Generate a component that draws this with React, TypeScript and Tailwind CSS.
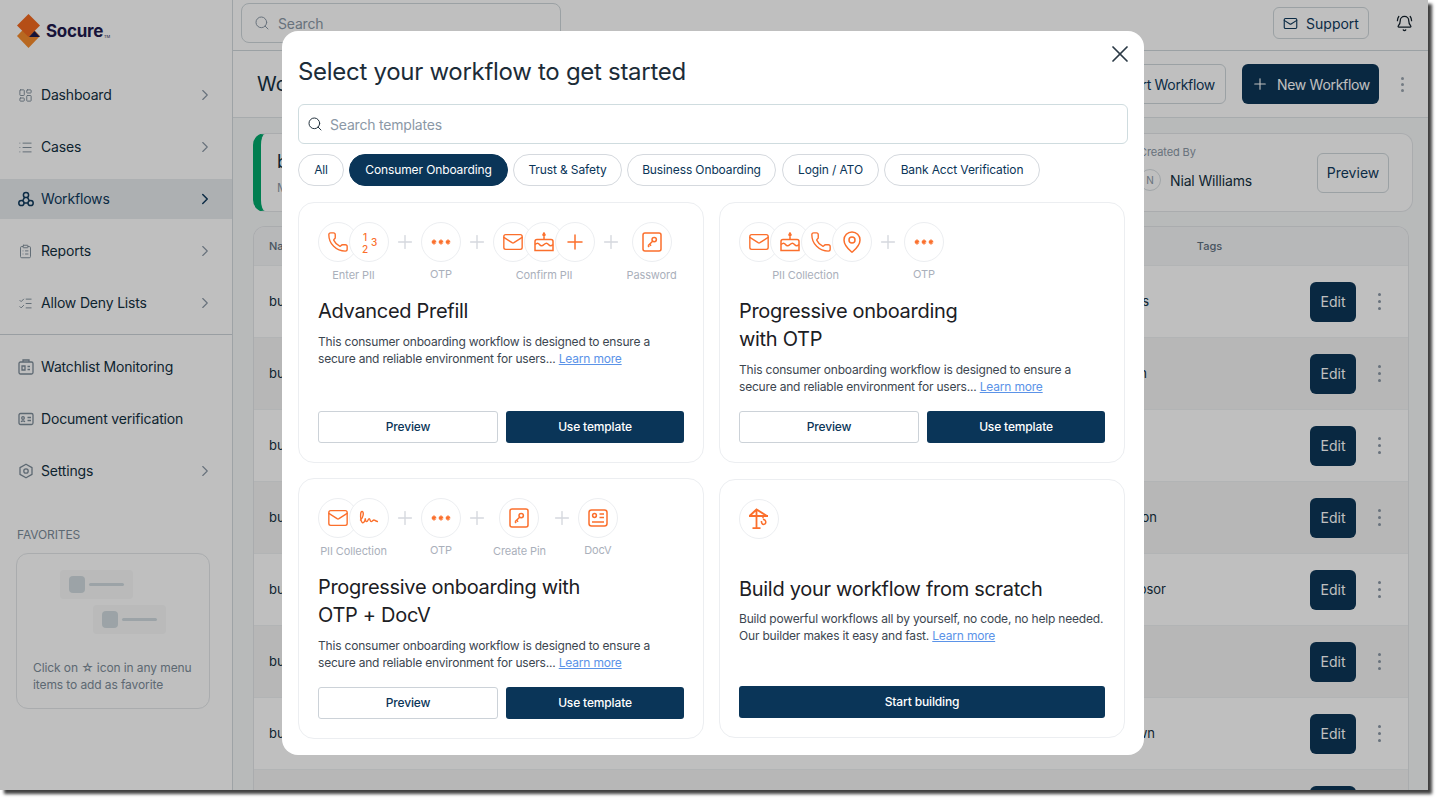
import { BellRing, ChevronRight, ClipboardList, FileText, LayoutDashboard, List, ListChecks, Mail, MapPin, Phone, Plus, Search, X } from "lucide-react";
import type { ReactNode } from "react";

const ORANGE = "text-[#fb6f2c]";

function OtpIcon() {
  const star = "M0-2.4V2.4M-2.1-1.2 2.1 1.2M-2.1 1.2 2.1-1.2";
  return (
    <svg width="20" height="6" viewBox="0 0 20 6" className={ORANGE} fill="none" stroke="currentColor" strokeWidth="1.5">
      <path d={star} transform="translate(3 3)" />
      <path d={star} transform="translate(10 3)" />
      <path d={star} transform="translate(17 3)" />
    </svg>
  );
}

function KeyIcon() {
  return (
    <svg width="20" height="20" viewBox="0 0 20 20" fill="none" stroke="currentColor" strokeWidth="1.5" className={ORANGE}>
      <rect x="1" y="1" width="18" height="18" rx="2" />
      <circle cx="12.2" cy="7.6" r="2.2" />
      <path d="M10.6 9.2 6 13.8M7.6 12.2l1.5 1.5M6 13.8l1.2 1.2" />
    </svg>
  );
}

function CakeIcon() {
  return (
    <svg width="20" height="20" viewBox="0 0 20 20" fill="none" stroke="currentColor" strokeWidth="1.5" className={ORANGE}>
      <path d="M1 18.5h18V9.5a2 2 0 0 0-2-2H3a2 2 0 0 0-2 2z" />
      <path d="M1 12.5c2-1.8 3.2-1.8 4.5 0s2.6 1.8 4.5 0 3-1.8 4.5 0 2.8 1.8 4.5 0" />
      <path d="M10 7.5V4.6M10 1l1 1.8a1 1 0 1 1-2 0z" />
    </svg>
  );
}

function SignIcon() {
  return (
    <svg width="20" height="20" viewBox="0 0 20 20" fill="none" stroke="currentColor" strokeWidth="1.4" strokeLinecap="round" className={ORANGE}>
      <path d="M1.5 12c3-2.5 3.6-8 1.6-8.6C1.4 3.2 1.3 8 2 12c.5 2.6 2 3.6 3.4 1.6.7-1 .9-3.3.9-3.3s.1 3.3 1.4 3.3c1.2 0 1.5-3 2.5-3 .9 0 .8 3 2 3 1.2 0 1.6-1.6 2.8-1.6.9 0 1 1 3.4 1.5" />
    </svg>
  );
}

function DocIcon() {
  return (
    <svg width="20" height="18" viewBox="0 0 20 18" fill="none" stroke="currentColor" strokeWidth="1.5" className={ORANGE}>
      <rect x="1" y="1" width="18" height="16" rx="2.5" />
      <circle cx="6.5" cy="6.5" r="1.9" />
      <path d="M11.5 5h4.5M11.5 8.5h4.5M4 13h12" />
    </svg>
  );
}

function CraneIcon() {
  return (
    <svg width="22" height="22" viewBox="0 0 22 22" fill="none" stroke="currentColor" strokeWidth="1.8" className={ORANGE}>
      <path d="M1 8h19M1.5 8 8.5 1.5 19 8M8.5 1.5V20M4.5 20.2h8" />
      <path d="M15 8v2.2M13.4 13c0 2.2 1 3.4 2.2 3.4s2.2-1 2.2-2.3c0-1.4-1-2.4-2.8-2.9" strokeWidth="1.5" />
    </svg>
  );
}

function NumbersIcon() {
  return (
    <span className={`relative block h-[24px] w-[22px] text-[10px] font-medium leading-none ${ORANGE}`}>
      <span className="absolute left-[5px] top-[2px]">1</span>
      <span className="absolute left-[4px] top-[14px]">2</span>
      <span className="absolute left-[13px] top-[7px]">3</span>
    </span>
  );
}

function Bubble({ children, overlap }: { children: ReactNode; overlap?: boolean }) {
  return (
    <div
      className={`flex h-10 w-10 shrink-0 items-center justify-center rounded-full border border-[#eceef1] bg-white ${
        overlap ? "-ml-[9px]" : ""
      }`}
    >
      {children}
    </div>
  );
}

type Step = { label: string; up?: boolean; narrow?: boolean; icons: ReactNode[] };

const phone = <Phone size={22} strokeWidth={1.5} className={ORANGE} />;
const mail = <Mail size={22} strokeWidth={1.5} className={ORANGE} />;
const cake = <CakeIcon />;
const plus = <Plus size={24} strokeWidth={1.5} className={ORANGE} />;
const pin = <MapPin size={24} strokeWidth={1.5} className={ORANGE} />;
const sign = <SignIcon />;
const idcard = <DocIcon />;
const otp = <OtpIcon />;
const key = <KeyIcon />;

function Steps({ steps }: { steps: Step[] }) {
  return (
    <div className="flex items-start gap-2">
      {steps.map((s, i) => (
        <div key={s.label} className="flex items-start gap-2">
          {i > 0 && <Plus size={22} strokeWidth={1.5} className="-mx-[3px] mt-[9px] text-[#d5d8de]" />}
          <div className={`flex flex-col items-center ${s.narrow ? "w-[49px]" : ""}`}>
            <div className="flex">
              {s.icons.map((icon, j) => (
                <Bubble key={j} overlap={j > 0}>
                  {icon}
                </Bubble>
              ))}
            </div>
            <span className={`whitespace-nowrap text-[11px] leading-[14px] tracking-[-0.1px] text-[#aab0bb] ${s.up ? "mt-[5px]" : "mt-[6px]"}`}>
              {s.label}
            </span>
          </div>
        </div>
      ))}
    </div>
  );
}

function TemplateCard({ steps, title, footerTop }: { steps: Step[]; title: ReactNode; footerTop: string }) {
  return (
    <div className="flex h-[261px] flex-col rounded-2xl border border-[#eceef1] bg-white px-[19px] pt-[19px]">
      <Steps steps={steps} />
      <h3 className="mt-[15px] text-[20px] leading-[28px] tracking-[-0.3px] text-[#1c2024]">{title}</h3>
      <p className="mt-2 text-[12px] leading-[17px] tracking-[-0.19px] text-[#3c4650]">
        This consumer onboarding workflow is designed to ensure a
        <br />
        secure and reliable environment for users...{" "}
        <span className="text-[#5b93e8] underline">Learn more</span>
      </p>
      <div className={`flex gap-2 ${footerTop}`}>
        <button className="h-8 flex-1 rounded-[3px] border border-[#ccd2d8] bg-white text-[12px] font-medium tracking-[-0.15px] text-[#0a3558]">
          Preview
        </button>
        <button className="h-8 flex-1 rounded-[3px] bg-[#0a3558] text-[12px] font-medium tracking-[-0.15px] text-white">Use template</button>
      </div>
    </div>
  );
}

function WorkflowsIcon() {
  return (
    <svg width="16" height="16" viewBox="0 0 16 16" fill="none" stroke="currentColor" strokeWidth="1.5">
      <circle cx="8" cy="4" r="2.6" />
      <circle cx="3.4" cy="12" r="2.6" />
      <circle cx="12.6" cy="12" r="2.6" />
      <path d="M6.6 6.2 4.8 9.6M9.4 6.2l1.8 3.4M6 12h4" />
    </svg>
  );
}

function WatchIcon() {
  return (
    <svg width="16" height="16" viewBox="0 0 16 16" fill="none" stroke="currentColor" strokeWidth="1.3">
      <rect x="1" y="3" width="14" height="12" rx="1.5" />
      <path d="M5 3V1h6v2M4 7h3v4H4zM9.5 7.5H12M9.5 10.5H12" />
    </svg>
  );
}

function DocNavIcon() {
  return (
    <svg width="16" height="16" viewBox="0 0 16 16" fill="none" stroke="currentColor" strokeWidth="1.3">
      <rect x="1" y="2.5" width="14" height="11" rx="1.5" />
      <circle cx="5" cy="7" r="1.3" />
      <path d="M3.2 11c.6-1.4 3-1.4 3.6 0M9.5 6.5H13M9.5 9.5H13" />
    </svg>
  );
}

function SettingsIcon() {
  return (
    <svg width="16" height="16" viewBox="0 0 16 16" fill="none" stroke="currentColor" strokeWidth="1.3">
      <path d="M8 1.2 14 4.6v6.8L8 14.8l-6-3.4V4.6z" strokeLinejoin="round" />
      <circle cx="8" cy="8" r="2.2" />
    </svg>
  );
}

const NAV_TOP = [
  { label: "Dashboard", icon: LayoutDashboard },
  { label: "Cases", icon: List },
  { label: "Workflows", icon: WorkflowsIcon, active: true },
  { label: "Reports", icon: ClipboardList },
  { label: "Allow Deny Lists", icon: ListChecks },
];

const NAV_BOTTOM = [
  { label: "Watchlist Monitoring", icon: WatchIcon, noArrow: true },
  { label: "Document verification", icon: DocNavIcon, noArrow: true },
  { label: "Settings", icon: SettingsIcon },
];

function NavRow({ label, Icon, active, noArrow }: { label: string; Icon: any; active?: boolean; noArrow?: boolean }) {
  return (
    <div className={`flex h-10 items-center pl-[18px] pr-[18px] ${active ? "bg-[#e7ebee] text-[#0f3a5c]" : "text-[#13303f]"}`}>
      <span className={`flex w-[23px] ${active ? "text-[#0f3a5c]" : "text-[#7d8c99]"}`}>
        <Icon size={15} strokeWidth={1.5} />
      </span>
      <span className="flex-1 pb-[2px] text-[14px] tracking-[-0.18px]">{label}</span>
      {!noArrow && <ChevronRight size={18} strokeWidth={active ? 2 : 1.5} className={active ? "text-[#0f3a5c]" : "text-[#8b98a6]"} />}
    </div>
  );
}

function FavoriteChip({ offset }: { offset: string }) {
  return (
    <div className={`flex h-[29px] w-[73px] items-center gap-1 self-start rounded bg-[#f8f9f9] px-[9px] ${offset}`}>
      <span className="h-[17px] w-[17px] rounded bg-[#d0dadf]" />
      <span className="h-[3px] w-9 rounded bg-[#d0dadf]" />
    </div>
  );
}

function Sidebar() {
  return (
    <aside className="flex h-full w-[233px] shrink-0 flex-col border-r border-[#d3dade] bg-white">
      <div className="flex h-[75px] items-start pl-[17px] pt-[14px]">
        <svg width="24" height="34" viewBox="0 0 24 34">
          <path d="M0 22 11.5 10 23 22 11.5 34z" fill="#f68b2c" />
          <path d="M11.5 0 23 11.5 11.5 23 0 11.5z" fill="#f2681f" />
          <path d="M12 23 17.5 17 23 23z" fill="#1f1a4d" />
        </svg>
        <span className="ml-[5px] mt-[5px] text-[17px] font-bold tracking-[-0.3px] text-[#1f1a4d]">Socure</span>
        <span className="ml-px mt-[20px] text-[4px] text-[#1f1a4d]">TM</span>
      </div>
      <nav className="flex flex-col gap-3">
        {NAV_TOP.map((n) => (
          <NavRow key={n.label} label={n.label} Icon={n.icon} active={n.active} />
        ))}
      </nav>
      <div className="mt-[11px] border-t border-[#ccd3d8]" />
      <nav className="mt-3 flex flex-col gap-3">
        {NAV_BOTTOM.map((n) => (
          <NavRow key={n.label} label={n.label} Icon={n.icon} noArrow={n.noArrow} />
        ))}
      </nav>
      <div className="mt-9 pl-[17px] text-[12px] leading-4 tracking-[-0.1px] text-[#7d8c99]">FAVORITES</div>
      <div className="ml-4 mt-[10px] flex h-[156px] w-[194px] flex-col rounded-xl border border-[#e3e6e9] px-4 pt-4">
        <FavoriteChip offset="ml-[27px]" />
        <FavoriteChip offset="ml-[60px] mt-[6px]" />
        <p className="mt-[25px] text-[12px] leading-[17px] tracking-[-0.1px] text-[#7d8c99]">
          Click on ☆ icon in any menu
          <br />
          items to add as favorite
        </p>
      </div>
    </aside>
  );
}

const ROWS = [
  { owner: "Williams", w: "w-[59px]" },
  { owner: "Nolan", w: "w-[57px]" },
  { owner: "", w: "w-[59px]" },
  { owner: "Jason", w: "w-[67px]" },
  { owner: "Ambrosor", w: "w-[76px]" },
  { owner: "", w: "w-[59px]" },
  { owner: "Brown", w: "w-[65px]" },
  { owner: "", w: "w-[59px]" },
];

function Page() {
  return (
    <div className="flex h-full">
      <Sidebar />
      <main className="flex min-w-0 flex-1 flex-col bg-[#f6f8f9]">
        <header className="flex h-[51px] shrink-0 items-start border-b border-[#cfd7db] bg-white pl-2 pr-[15px]">
          <div className="mt-[3px] flex h-10 w-[320px] items-center gap-2 rounded-lg border border-[#cfd7db] px-3 text-[14px] tracking-[-0.2px] text-[#8b98a6]">
            <Search size={16} strokeWidth={1.5} />
            Search
          </div>
          <div className="ml-auto mt-[7px] flex h-8 w-24 items-center justify-center gap-2 rounded-md border border-[#cfd7db] text-[14px] text-[#0f3a5c]">
            <Mail size={15} strokeWidth={1.8} />
            Support
          </div>
          <BellRing size={17} strokeWidth={1.8} className="ml-[27px] mt-[15px] text-[#13202b]" />
        </header>
        <div className="flex h-[67px] shrink-0 items-center border-b border-[#dfe4e7] bg-white pl-6 pr-[24px]">
          <h1 className="text-[20px] text-[#13303f]">Workflows</h1>
          <div className="ml-auto flex h-10 w-[150px] items-center justify-end rounded-md border border-[#cfd7db] pr-[10px] text-[14px] tracking-[-0.3px] text-[#0f3a5c]">
            Import Workflow
          </div>
          <div className="ml-4 flex h-10 w-[137px] items-center justify-center gap-2 rounded-md bg-[#0c3657] text-[14px] tracking-[-0.3px] text-white">
            <Plus size={18} strokeWidth={1.5} />
            New Workflow
          </div>
          <span className="ml-[22px] flex flex-col gap-[3px]">
            <i className="h-[3px] w-[3px] rounded-full bg-[#9aa5af]" />
            <i className="h-[3px] w-[3px] rounded-full bg-[#9aa5af]" />
            <i className="h-[3px] w-[3px] rounded-full bg-[#9aa5af]" />
          </span>
        </div>
        <div className="ml-5 mr-[15px] mt-[15px] flex h-[79px] shrink-0 items-center rounded-xl border border-[#e3e6e9] border-l-[8px] border-l-[#00a86b] bg-white pl-4 pr-[23px]">
          <div>
            <div className="text-[18px] leading-6 text-[#13303f]">business</div>
            <div className="mt-[6px] text-[12px] leading-4 text-[#8b98a6]">Modified</div>
          </div>
          <div className="ml-auto w-[178px] self-start pt-[11px]">
            <div className="text-[11px] leading-[14px] tracking-[-0.1px] text-[#8b98a6]">Created By</div>
            <div className="mt-[10px] flex h-[22px] items-center gap-[9px] text-[14px] tracking-[-0.15px] text-[#13303f]">
              <span className="flex h-[22px] w-[22px] items-center justify-center rounded-full border border-[#d7dde1] text-[10px] text-[#8b98a6]">N</span>
              Nial Williams
            </div>
          </div>
          <div className="flex h-10 w-[72px] items-center justify-center rounded-md border border-[#cfd7db] text-[14px] text-[#0f3a5c]">Preview</div>
        </div>
        <div className="ml-5 mr-[19px] mt-[14px] flex-1 overflow-hidden rounded-t-xl border-x border-t border-[#e3e6e9]">
          <div className="flex h-[38px] items-center bg-[#f5f6f7] pl-[15px] text-[11px] font-medium text-[#5f7080]">
            Name
            <span className="ml-[897px]">Tags</span>
          </div>
          {ROWS.map((r, i) => (
            <div key={i} className={`flex h-[72px] items-center border-t border-[#eef0f2] pl-[15px] pr-[27px] ${i % 2 ? "bg-[#f4f5f5]" : "bg-white"}`}>
              <span className="w-[821px] text-[13px] text-[#13303f]">business</span>
              <span className={`${r.w} whitespace-nowrap text-right text-[13px] text-[#13303f]`}>{r.owner}</span>
              <div className="ml-auto flex h-10 w-[46px] items-center justify-center rounded-md bg-[#0c3657] text-[14px] text-white">Edit</div>
              <span className="ml-[22px] flex flex-col gap-[4px]">
                <i className="h-[3px] w-[3px] rounded-full bg-[#8b98a6]" />
                <i className="h-[3px] w-[3px] rounded-full bg-[#8b98a6]" />
                <i className="h-[3px] w-[3px] rounded-full bg-[#8b98a6]" />
              </span>
            </div>
          ))}
        </div>
      </main>
    </div>
  );
}

const CHIPS = [
  { label: "All", w: "w-[46px]", gap: "" },
  { label: "Consumer Onboarding", w: "w-[159px]", gap: "ml-[5px]" },
  { label: "Trust & Safety", w: "w-[109px]", gap: "ml-[5px]" },
  { label: "Business Onboarding", w: "w-[149px]", gap: "ml-[5px]" },
  { label: "Login / ATO", w: "w-[97px]", gap: "ml-[6px]" },
  { label: "Bank Acct Verification", w: "w-[156px]", gap: "ml-[5px]" },
];

function Modal() {
  return (
    <div className="absolute left-[282px] top-[31px] h-[724px] w-[862px] rounded-2xl bg-white pl-4 pr-4 pt-[24px]">
      <button className="absolute right-[10px] top-[9px] text-[#2b3a46]">
        <X size={28} strokeWidth={1.5} />
      </button>
      <h2 className="pt-px text-[24px] leading-8 tracking-[-0.29px] text-[#1c2c38]">Select your workflow to get started</h2>
      <div className="mt-4 flex h-10 items-center gap-[7px] rounded-md border border-[#cfdcdf] px-2 text-[14px] tracking-[-0.2px] text-[#8b98a6]">
        <Search size={16} strokeWidth={1.5} className="text-[#24333f]" />
        Search templates
      </div>
      <div className="mt-[10px] flex">
        {CHIPS.map((c) => (
          <span
            key={c.label}
            className={`flex h-8 items-center justify-center rounded-full border text-[12px] tracking-[-0.12px] ${c.w} ${c.gap} ${
              c.label === "Consumer Onboarding" ? "border-[#0a3558] bg-[#0a3558] text-white" : "border-[#d5d9de] bg-white text-[#0a3558]"
            }`}
          >
            {c.label}
          </span>
        ))}
      </div>
      <div className="mt-4 grid w-[827px] grid-cols-[406px_406px] gap-[15px]">
        <TemplateCard
          title="Advanced Prefill"
          footerTop="mt-[44px]"
          steps={[
            { label: "Enter PII", icons: [phone, <NumbersIcon key="n" />] },
            { label: "OTP", up: true, icons: [otp] },
            { label: "Confirm PII", icons: [mail, cake, plus] },
            { label: "Password", narrow: true, icons: [key] },
          ]}
        />
        <TemplateCard
          title={
            <>
              Progressive onboarding
              <br />
              with OTP
            </>
          }
          footerTop="mt-4"
          steps={[
            { label: "PII Collection", icons: [mail, cake, phone, pin] },
            { label: "OTP", up: true, icons: [otp] },
          ]}
        />
        <TemplateCard
          title={
            <>
              Progressive onboarding with
              <br />
              OTP + DocV
            </>
          }
          footerTop="mt-4"
          steps={[
            { label: "PII Collection", icons: [mail, sign] },
            { label: "OTP", up: true, icons: [otp] },
            { label: "Create Pin", icons: [key] },
            { label: "DocV", up: true, icons: [idcard] },
          ]}
        />
        <div className="my-px flex h-[259px] flex-col rounded-2xl border border-[#eceef1] bg-white px-[19px] pt-[19px]">
          <Bubble>
            <CraneIcon />
          </Bubble>
          <h3 className="mt-9 text-[20px] leading-[28px] tracking-[-0.3px] text-[#1c2024]">Build your workflow from scratch</h3>
          <p className="mt-[7px] text-[12px] leading-[17px] tracking-[-0.19px] text-[#3c4650]">
            Build powerful workflows all by yourself, no code, no help needed.
            <br />
            Our builder makes it easy and fast. <span className="text-[#5b93e8] underline">Learn more</span>
          </p>
          <button className="mt-[42px] h-8 shrink-0 rounded-[3px] bg-[#0a3558] text-[12px] font-medium tracking-[-0.15px] text-white">Start building</button>
        </div>
      </div>
    </div>
  );
}

export default function App() {
  return (
    <div className="h-[800px] w-[1438px] overflow-hidden bg-white font-['Inter',sans-serif]">
      <div className="relative h-[790px] w-[1428px] overflow-hidden bg-white shadow-[4px_4px_3px_rgba(0,0,0,0.75)]">
        <Page />
        <div className="absolute inset-0 bg-black/25" />
        <Modal />
      </div>
    </div>
  );
}
